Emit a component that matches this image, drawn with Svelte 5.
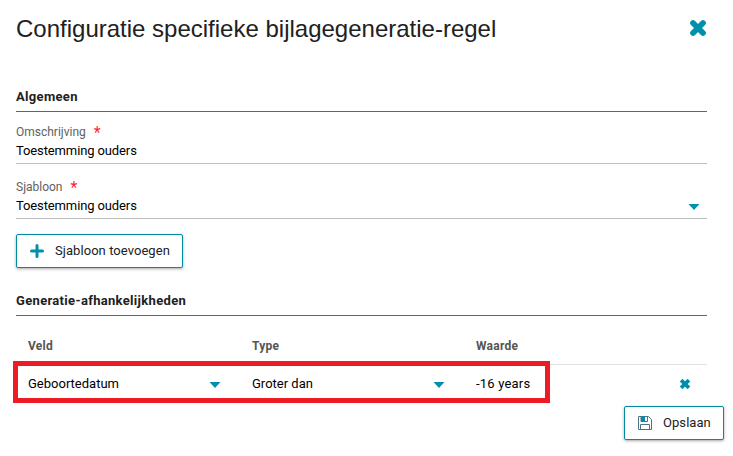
<script>
  let description = 'Toestemming ouders'
  let template = 'Toestemming ouders'

  let dependencies = [
    { field: 'Geboortedatum', type: 'Groter dan', value: '-16 years' }
  ]

  function removeDependency(index) {
    dependencies = dependencies.filter((_, i) => i !== index)
  }
</script>

<div class="dialog">
  <header class="dialog-header">
    <h1>Configuratie specifieke bijlagegeneratie-regel</h1>
    <button class="icon-button" aria-label="Sluiten">
      <svg width="18" height="18" viewBox="0 0 18 18">
        <path class="cross large" d="M4 4 L14 14 M14 4 L4 14" />
      </svg>
    </button>
  </header>

  <h2>Algemeen</h2>

  <div class="field">
    <span class="label">Omschrijving <span class="required">*</span></span>
    <span class="value">{description}</span>
  </div>

  <div class="field">
    <span class="label">Sjabloon <span class="required">*</span></span>
    <span class="value">{template}
      <svg class="caret" width="12" height="6" viewBox="0 0 12 6"><path d="M0.5 0 H11.5 L6 6 Z" /></svg>
    </span>
  </div>

  <button class="button add">
    <svg width="14" height="14" viewBox="0 0 14 14"><path class="plus" d="M7 1.5 V12.5 M1.5 7 H12.5" /></svg>
    <span>Sjabloon toevoegen</span>
  </button>

  <h2 class="dependencies-title">Generatie-afhankelijkheden</h2>

  <div class="table">
    <div class="row head">
      <span>Veld</span>
      <span>Type</span>
      <span>Waarde</span>
    </div>
    {#each dependencies as dependency, index}
      <div class="row">
        <span class="select">{dependency.field}
          <svg class="caret" width="12" height="6" viewBox="0 0 12 6"><path d="M0.5 0 H11.5 L6 6 Z" /></svg>
        </span>
        <span class="select">{dependency.type}
          <svg class="caret" width="12" height="6" viewBox="0 0 12 6"><path d="M0.5 0 H11.5 L6 6 Z" /></svg>
        </span>
        <span class="amount">{dependency.value}</span>
        <button class="icon-button remove" aria-label="Verwijderen" on:click={() => removeDependency(index)}>
          <svg width="12" height="12" viewBox="0 0 12 12">
            <path class="cross small" d="M2.1 2.1 L9.9 9.9 M9.9 2.1 L2.1 9.9" />
          </svg>
        </button>
      </div>
    {/each}
    <div class="highlight"></div>
  </div>

  <footer>
    <button class="button save">
      <svg width="14" height="14" viewBox="0 0 14 14">
        <path class="disk" d="M0.5 0.5 H10.5 L13.5 3.5 V13.5 H0.5 Z M3 0.5 V5.5 H9.5 V0.5 M2.5 13.5 V8.5 H11.5 V13.5" />
        <path class="shutter" d="M3 0.5 H7 V5.2 H3 Z" />
      </svg>
      <span>Opslaan</span>
    </button>
  </footer>
</div>

<style>
  :global(body) {
    background: #fff;
  }

  .dialog {
    box-sizing: border-box;
    width: 733px;
    height: 456px;
    padding: 0 26px 0 16px;
    overflow: hidden;
    color: #212121;
    font-family: Roboto, 'Liberation Sans', sans-serif;
    font-size: 13px;
  }

  .dialog-header {
    display: flex;
    justify-content: space-between;
    height: 82px;
  }

  h1 {
    margin: 13px 0 0;
    font-family: 'Liberation Sans', Arial, sans-serif;
    font-size: 24px;
    font-weight: 400;
    line-height: 32px;
    white-space: nowrap;
  }

  h2 {
    box-sizing: border-box;
    height: 30px;
    margin: 0;
    border-bottom: 1px solid #008ba3;
    font-size: 13px;
    font-weight: 700;
    letter-spacing: 0.32px;
    line-height: 30px;
  }

  .icon-button {
    display: block;
    padding: 0;
    border: 0;
    background: none;
  }

  .dialog-header .icon-button {
    align-self: flex-start;
    margin-top: 19px;
  }

  svg {
    display: block;
    flex: none;
  }

  .cross,
  .plus {
    fill: none;
    stroke: #0090ad;
  }

  .cross.large {
    stroke-width: 5.7;
    stroke-linecap: round;
  }

  .cross.small {
    stroke-width: 3.8;
  }

  .plus {
    stroke-width: 3;
    stroke-linecap: round;
  }

  .caret {
    fill: #0090ad;
  }

  .field {
    box-sizing: border-box;
    height: 52px;
    padding-top: 12px;
    border-bottom: 1px solid #bdbdbd;
  }

  .field + .field {
    height: 55px;
    padding-top: 15px;
  }

  .label {
    display: flex;
    gap: 8px;
    height: 16px;
    color: #616161;
    font-size: 12px;
    line-height: 16px;
  }

  .required {
    color: #ff1f3d;
    font-size: 16px;
    line-height: 18px;
  }

  .value {
    display: flex;
    align-items: center;
    justify-content: space-between;
    height: 22px;
    padding-right: 7px;
    color: #000;
    letter-spacing: -0.12px;
    line-height: 22px;
  }

  .value .caret {
    margin-top: 2px;
  }

  .button {
    display: flex;
    align-items: center;
    box-sizing: border-box;
    height: 34px;
    padding: 0 0 1px 13px;
    border: 1px solid #008ba3;
    border-radius: 2px;
    background: #fff;
    box-shadow: 0 1px 3px rgba(0, 0, 0, 0.35);
    color: #212121;
    font: inherit;
    letter-spacing: 0.06px;
    white-space: nowrap;
  }

  .add {
    width: 167px;
    margin-top: 15px;
    gap: 11px;
  }

  .dependencies-title {
    height: 30px;
    margin-top: 18px;
  }

  .table {
    position: relative;
  }

  .row {
    display: grid;
    grid-template-columns: 224px 224px 1fr auto;
    align-items: center;
    box-sizing: border-box;
    height: 38px;
    padding: 0 0 1px 12px;
    color: #000;
  }

  .head {
    height: 49px;
    padding: 11px 0 0 12px;
    border-bottom: 1px solid #e0e0e0;
    color: #555;
    font-size: 12px;
    font-weight: 700;
    letter-spacing: 0.25px;
  }

  .select {
    display: flex;
    align-items: center;
    justify-content: space-between;
    padding-right: 31px;
  }

  .select .caret {
    margin-top: 2px;
  }

  .amount {
    letter-spacing: 0.2px;
  }

  .remove {
    margin-right: 16px;
  }

  .highlight {
    position: absolute;
    top: 45px;
    left: -3px;
    box-sizing: border-box;
    width: 537px;
    height: 42px;
    border: 5px solid #ed1c24;
    pointer-events: none;
  }

  footer {
    display: flex;
    justify-content: flex-end;
    margin: 3px -17px 0 0;
  }

  .save {
    width: 100px;
    gap: 11px;
  }

  .disk {
    fill: none;
    stroke: #4b7487;
    stroke-width: 1;
  }

  .shutter {
    fill: #0090ad;
  }
</style>
